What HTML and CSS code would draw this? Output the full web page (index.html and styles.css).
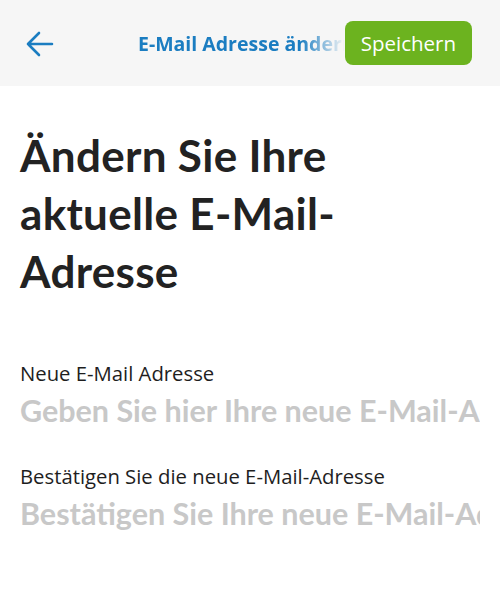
FILE: index.html
```html
<!DOCTYPE html>
<html lang="de">
<head>
  <meta charset="UTF-8">
  <title>E-Mail Adresse ändern</title>
  <link rel="stylesheet" href="styles.css">
</head>
<body>

<header class="topbar">
  <button class="back" aria-label="Zurück">
    <svg width="28" height="28" viewBox="0 0 28 28" fill="none" stroke="#1b7dc1" stroke-width="2.6" stroke-linecap="round" stroke-linejoin="round">
      <path d="M26 14H2M13 3L2 14l11 11"/>
    </svg>
  </button>
  <div class="title">E-Mail Adresse ändern</div>
  <button class="save">Speichern</button>
</header>

<main class="content">
  <h1>Ändern Sie Ihre aktuelle E-Mail-Adresse</h1>

  <label class="field">
    <span class="label">Neue E-Mail Adresse</span>
    <input type="email" placeholder="Geben Sie hier Ihre neue E-Mail-Adresse ein">
  </label>

  <label class="field">
    <span class="label">Bestätigen Sie die neue E-Mail-Adresse</span>
    <input type="email" placeholder="Bestätigen Sie Ihre neue E-Mail-Adresse">
  </label>
</main>

</body>
</html>
```

FILE: styles.css
```css
body { margin: 0; background: #fff; font-family: "Open Sans", sans-serif; color: #1e1e1e; }

.topbar { display: flex; align-items: center; height: 86px; padding: 0 28px 0 26px; background: #f6f6f6; }
.back { display: flex; padding: 0; border: 0; background: none; margin-top: 1px; }
.title { flex: 1; margin-left: 84px; overflow: hidden; white-space: nowrap; font-size: 19.5px; font-weight: 700; color: #1b7dc1;
  -webkit-mask-image: linear-gradient(to right, #000 calc(100% - 45px), transparent 100%);
  mask-image: linear-gradient(to right, #000 calc(100% - 45px), transparent 100%); }
.save { height: 44px; margin-bottom: 1px; padding: 0 16px; border: 0; border-radius: 8px; background: #6cb31f; color: #fff;
  font-family: "Open Sans", sans-serif; font-size: 20.5px; }

.content { padding: 0 20px; }
h1 { max-width: 380px; margin: 40px 0 60px; font-family: Lato, sans-serif; font-size: 44px; font-weight: 700; line-height: 58px;
  letter-spacing: 0.3px; color: #222; }

.field { display: block; margin-bottom: 33px; }
.label { display: block; font-size: 20.3px; line-height: 26px; color: #1e1e1e; }
input { display: block; width: 100%; padding: 0; margin-top: 4px; border: 0; outline: 0; background: none;
  font-family: Lato, sans-serif; font-size: 30.5px; font-weight: 700; line-height: 40px; }
input::placeholder { color: #c8c8c8; }
```
